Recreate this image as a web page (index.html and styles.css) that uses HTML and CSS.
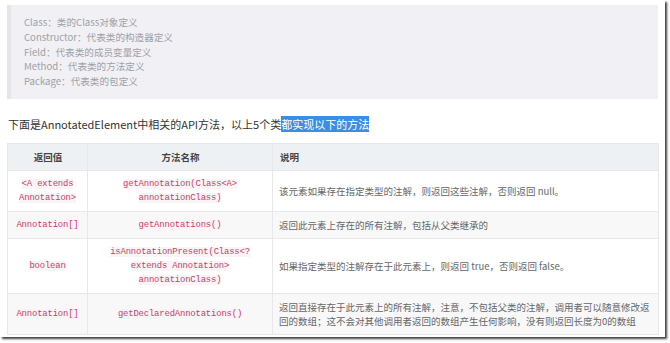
FILE: index.html
```html
<!DOCTYPE html>
<html>
<head>
<meta charset="utf-8">
<link rel="stylesheet" href="styles.css">
</head>
<body>
<div class="frame">
  <blockquote class="quote">
    <div>Class：类的Class对象定义</div>
    <div>Constructor：代表类的构造器定义</div>
    <div>Field：代表类的成员变量定义</div>
    <div>Method：代表类的方法定义</div>
    <div>Package：代表类的包定义</div>
  </blockquote>
  <p class="lead">下面是AnnotatedElement中相关的API方法，以上5个类<span class="sel">都实现以下的方法</span></p>
  <table class="api">
    <colgroup>
      <col class="c1"><col class="c2"><col class="c3">
    </colgroup>
    <thead>
      <tr><th class="center">返回值</th><th class="center">方法名称</th><th>说明</th></tr>
    </thead>
    <tbody>
      <tr>
        <td class="code"><code>&lt;A extends Annotation&gt;</code></td>
        <td class="code"><code>getAnnotation(Class&lt;A&gt; annotationClass)</code></td>
        <td>该元素如果存在指定类型的注解，则返回这些注解，否则返回 null。</td>
      </tr>
      <tr class="alt">
        <td class="code"><code>Annotation[]</code></td>
        <td class="code"><code>getAnnotations()</code></td>
        <td>返回此元素上存在的所有注解，包括从父类继承的</td>
      </tr>
      <tr>
        <td class="code"><code>boolean</code></td>
        <td class="code"><code>isAnnotationPresent(Class&lt;? extends Annotation&gt; annotationClass)</code></td>
        <td>如果指定类型的注解存在于此元素上，则返回 true，否则返回 false。</td>
      </tr>
      <tr class="alt">
        <td class="code"><code>Annotation[]</code></td>
        <td class="code"><code>getDeclaredAnnotations()</code></td>
        <td>返回直接存在于此元素上的所有注解，注意，不包括父类的注解，调用者可以随意修改返回的数组；这不会对其他调用者返回的数组产生任何影响，没有则返回长度为0的数组</td>
      </tr>
    </tbody>
  </table>
</div>
</body>
</html>
```
FILE: styles.css
```css
html, body {
  margin: 0;
  padding: 0;
  background: #ffffff;
}
body {
  font-family: "Noto Sans CJK SC", "Noto Sans", sans-serif;
  width: 670px;
  height: 343px;
  overflow: hidden;
}
.frame {
  width: 665px;
  height: 337px;
  box-sizing: border-box;
  padding: 5px 0 0 7px;
  background: #ffffff;
  box-shadow: 2px 2px 2px rgba(30, 30, 30, 0.85);
}
.quote {
  margin: 0;
  width: 651px;
  box-sizing: border-box;
  padding: 10px 12px 10px 13px;
  background: #f0f0f5;
  border-left: 4px solid #e4e4ea;
  color: #a0a0a6;
  font-size: 9.6px;
  line-height: 14.8px;
}
.lead {
  margin: 0;
  padding: 17px 0 11px 1px;
  font-size: 11px;
  line-height: 16px;
  color: #333333;
}
.sel {
  background: #3a8ee6;
  color: #ffffff;
}
.api {
  width: 651px;
  border-collapse: collapse;
  table-layout: fixed;
  font-size: 9.5px;
  line-height: 14px;
  color: #666666;
}
.c1 { width: 80px; }
.c2 { width: 185px; }
.c3 { width: 386px; }
.api th, .api td {
  border: 1px solid #e8e8ec;
  padding: 6px 6px;
  text-align: left;
  vertical-align: middle;
}
.api th {
  background: #eef1f4;
  color: #444444;
  font-weight: bold;
  padding: 6px 6px 6px 7px;
}
.api td {
  background: #ffffff;
}
.api tr.alt td {
  background: #f8f8f9;
}
.api .center {
  text-align: center;
}
.api td.code {
  text-align: center;
  font-family: "Liberation Mono", "DejaVu Sans Mono", monospace;
  font-size: 8.9px;
  letter-spacing: -0.15px;
  line-height: 14px;
  padding: 6px 6px 6px;
}
code {
  font: inherit;
  color: #c7406a;
  background: #fbf4f6;
}
```
